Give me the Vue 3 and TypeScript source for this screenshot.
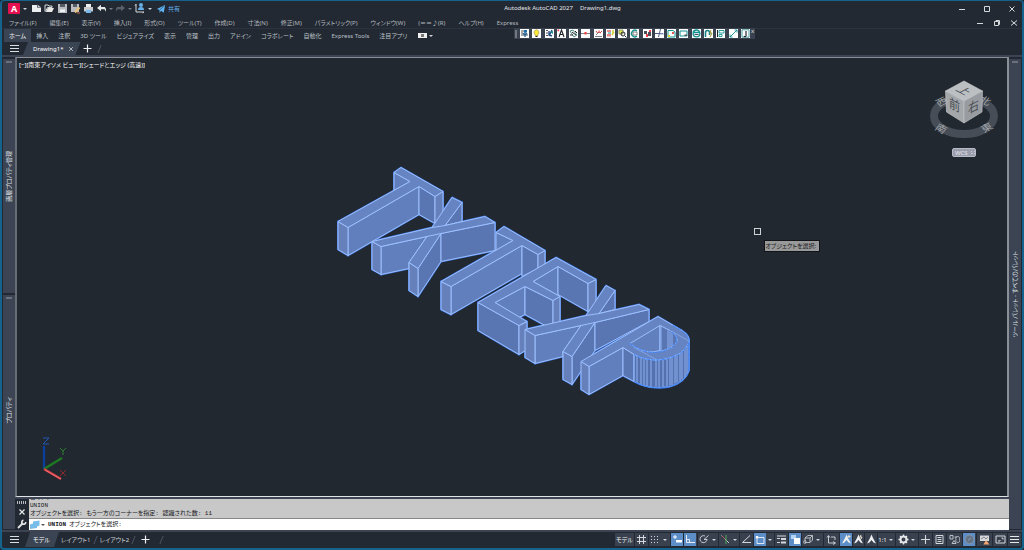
<script setup lang="ts">
import { ref } from 'vue'

interface Shape { d: string; fill?: string; stroke?: string; w?: number }
interface StatusItem { name: string; width: number; shapes?: Shape[]; text?: string; on?: boolean; arrow?: boolean }

const menus = ['ファイル(F)', '編集(E)', '表示(V)', '挿入(I)', '形式(O)', 'ツール(T)', '作成(D)', '寸法(N)', '修正(M)', 'パラメトリック(P)', 'ウィンドウ(W)', '(＝＝♪(R)', 'ヘルプ(H)', 'Express']
const ribbonTabs = ['ホーム', '挿入', '注釈', '3D ツール', 'ビジュアライズ', '表示', '管理', '出力', 'アドイン', 'コラボレート', '自動化', 'Express Tools', '注目アプリ']
const activeTab = ref('ホーム')
const layouts = ['モデル', 'レイアウト1', 'レイアウト2']
const activeLayout = ref('モデル')
const command = ref('')

const teal = '#159393'
const ink = '#20242c'
const G = '#d5d8dc'
const fileIcons: { name: string; cls?: string; shapes: Shape[] }[] = [
  { name: '新規作成', shapes: [{ d: 'M1 2H6V4.5H10V9H1Z', fill: '#eceef0' }, { d: 'M6.6 1.6 9.6 4H6.6Z', fill: '#c5c9cd' }] },
  { name: '開く', shapes: [{ d: 'M1 8.5V2H4L5 3H8V4.5H3.5L1.5 8.5', stroke: G, w: 1 }, { d: 'M3.8 5H10L8 9H1.8Z', fill: '#e8e8e6' }] },
  { name: '上書き保存', shapes: [{ d: 'M1 1H10V10H1Z', fill: '#b9bdc2' }, { d: 'M3 1H8V4H3Z', fill: '#555c66' }, { d: 'M3 6.5H8V9H3Z', fill: '#f0f1f2' }] },
  { name: '名前を付けて保存', shapes: [{ d: 'M1 1H9V9H1Z', fill: '#b9bdc2' }, { d: 'M3 1H7V4H3Z', fill: '#555c66' }, { d: 'M5 9.5 9.5 4.5', stroke: '#e9c27c', w: 2 }, { d: 'M7 10H10', stroke: '#cf7353', w: 1 }] },
  { name: '印刷', shapes: [{ d: 'M3 1H8V4H3Z', fill: '#eee' }, { d: 'M1 4H10V8.5H1Z', fill: '#c8ccd1' }, { d: 'M3 7H8V10H3Z', fill: '#79b9ed' }] },
  { name: '元に戻す', cls: 'wide', shapes: [{ d: 'M5 1.8 1 5 5 8.2V6.2H8.5L10 8.7V6L8.8 4H5Z', fill: '#e5e7e9' }] },
  { name: 'やり直し', cls: 'wide', shapes: [{ d: 'M6 1.8 10 5 6 8.2V6.2H2.5L1 8.7V6L2.2 4H6Z', fill: '#596069' }] },
  { name: 'ワークスペース', shapes: [{ d: 'M2 1V9H10M2 1.2 1 2.6M10 9 8.6 10', stroke: G, w: 1 }, { d: 'M5 2A2 2 0 1 0 9 2A2 2 0 1 0 5 2M4 7A3 3 0 0 1 10 7Z', fill: '#6ab0e8' }] },
]
const toolIcons: { name: string; shapes: Shape[] }[] = [
  { name: '画層 A', shapes: [{ d: 'M1 2H4M1 4H3M1 6H4M6 6H8', stroke: '#555', w: 1 }, { d: 'M5 1V8M3 4 5 6.5 7 4', stroke: '#1d5a8e', w: 1.2 }, { d: 'M4 1H7V3.5H4Z', fill: '#1d6fa5' }] },
  { name: '画層オン', shapes: [{ d: 'M4.5 .7A2.8 2.8 0 0 0 3 5.5L3.5 7H5.5L6 5.5A2.8 2.8 0 0 0 4.5 .7', fill: '#ffe83c', stroke: '#8d8630', w: .6 }, { d: 'M3.5 7.5H5.5', stroke: ink, w: 1 }] },
  { name: '画層 B', shapes: [{ d: 'M1 1.5H3M1 4H3M1 6.5H3', stroke: '#555', w: 1 }, { d: 'M4 7 7 1M4 2V6L7 7', stroke: '#244d86', w: 1.4 }, { d: 'M5 3 8 2V5Z', fill: teal }] },
  { name: '文字', shapes: [{ d: 'M2 8 4.5 1 7 8M3 5.5H6', stroke: ink, w: 1.1 }, { d: 'M.5 .5H2.2V2.2H.5Z', fill: '#ef3546' }] },
  { name: 'テキスト マスク', shapes: [{ d: 'M1 2 4 1 8 6 5 8Z', stroke: '#4c8c7f', w: 1 }, { d: 'M3 3 7 6M6 2 8 4M1 6H4', stroke: ink, w: 1 }] },
  { name: '結合', shapes: [{ d: 'M0 4.5H9', stroke: '#5a5e66', w: .8 }, { d: 'M3.5 3H5.5V5.5H3.5Z', fill: '#ff3d38' }] },
  { name: '円弧文字', shapes: [{ d: 'M1 7.5H8M2 6 5 3 7 4', stroke: '#575c65', w: .8 }, { d: 'M2 2 3.5 4M5 1.5V4M8 2 6 4', stroke: '#e33838', w: 1 }] },
  { name: '属性', shapes: [{ d: 'M1 1H5V3H1ZM1 5H5V7.5H1Z', fill: '#e98886' }, { d: 'M7 1V4M6 6 8 3', stroke: '#d3cf31', w: 1.5 }, { d: 'M2 4H5', stroke: teal, w: 1 }] },
  { name: 'ブロック', shapes: [{ d: 'M1 1H5V5H1Z', fill: '#e8e653', stroke: '#77835a', w: .8 }, { d: 'M3 5A2 2 0 1 0 7 5A2 2 0 1 0 3 5M7 7 8.5 8.5', stroke: ink, w: 1 }] },
  { name: '拡張オフセット', shapes: [{ d: 'M7 2A3.3 3.3 0 1 0 7 7', stroke: teal, w: 1.4 }, { d: 'M3 3H7V6H3Z', stroke: '#666', w: .8 }] },
  { name: '寸法', shapes: [{ d: 'M1 2H4V5H1ZM5 3H8V7H5Z', fill: '#4b4c58' }, { d: 'M3 5H5V8H3ZM6 1H8V3H6Z', fill: '#ef4049' }] },
  { name: 'トリム', shapes: [{ d: 'M0 4.5H8M5.5 0 3.5 8', stroke: '#515b82', w: 1 }, { d: 'M5 5H9', stroke: '#9fb3d8', w: 1 }] },
  { name: '修正雲', shapes: [{ d: 'M1 1.5H6L8 3V8H1Z', stroke: teal, w: 1 }, { d: 'M1 6H3V8H1Z', fill: '#ddda35' }, { d: 'M5 3H7V5H5Z', fill: '#e85151' }] },
  { name: 'ワイプアウト', shapes: [{ d: 'M1 2H8V7H1Z', stroke: teal, w: 1 }, { d: 'M5.5 5.5H8V7H5.5Z', fill: '#555' }] },
  { name: '円形', shapes: [{ d: 'M1 3.5H8M4.5 1A3.3 3.3 0 1 0 4.5 7.8A3.3 3.3 0 1 0 4.5 1', stroke: teal, w: 1.3 }, { d: 'M2.5 5.5H6.5', stroke: ink, w: .8 }] },
  { name: '磁石', shapes: [{ d: 'M1.5 8V3.5Q1.5 1.5 3.5 1.5T5.5 3.5V6', stroke: '#157f86', w: 1.6 }, { d: 'M7 1 5.8 4H8L6 8', stroke: '#9b9328', w: 1 }] },
  { name: '整列', shapes: [{ d: 'M1.5 1V8', stroke: ink, w: 1 }, { d: 'M3 1.5H8V4H3ZM3 5.5H6V7.5H3Z', stroke: teal, w: .9 }] },
  { name: '線分', shapes: [{ d: 'M1 8 8 1M5.5 1H8V3.5M1 5.5V8H3.5', stroke: teal, w: .9 }] },
  { name: '属性書き出し', shapes: [{ d: 'M1 .8H8V8.2H1Z', stroke: '#4c9da0', w: 1 }, { d: 'M5 2V6M3 7A1 1 0 1 0 5 6', stroke: ink, w: 1.2 }] },
]

const person = (extra: string): Shape[] => [{ d: 'M5.5 .5 7 4 10 9.5 7.5 8.5 5.5 6 3.5 8.5 1 9.5 4 4Z', fill: '#eef0f2' }, { d: extra, stroke: '#f3e7ce', w: 1 }]
const statusItems: StatusItem[] = [
  { name: 'モデル空間', width: 19, text: 'モデル' },
  { name: 'グリッド', width: 13, shapes: [{ d: 'M1 3.5H10M1 7.5H10M3.5 1V10M7.5 1V10', stroke: G, w: 1 }] },
  { name: 'スナップ', width: 21, arrow: true, shapes: [{ d: 'M1 2.5H2M4 2.5H5M7 2.5H8M1 5.5H2M4 5.5H5M7 5.5H8M1 8.5H2M4 8.5H5M7 8.5H8', stroke: G, w: 1 }] },
  { name: 'ダイナミック入力', width: 12, on: true, shapes: [{ d: 'M3 1V5M1 3H5', stroke: '#fff', w: 1 }, { d: 'M4 6H10V8.5H4Z', fill: '#fff' }] },
  { name: '直交モード', width: 13, on: true, shapes: [{ d: 'M1.5 1V8.5H10M1.5 5.5H4.5V8.5', stroke: '#e9edf3', w: 1 }] },
  { name: '極トラッキング', width: 20, arrow: true, shapes: [{ d: 'M8 5A3.5 3.5 0 1 1 6 2M5 5.5 9.5 1.5M5 5.5H8', stroke: G, w: .9 }] },
  { name: 'アイソメ作図', width: 20, arrow: true, shapes: [{ d: 'M1.5 1.5 9 9', stroke: '#b9c1c8', w: 1 }, { d: 'M6 1V10', stroke: '#4ca557', w: 1 }, { d: 'M2 2 5 5', stroke: '#b75c5f', w: 1 }] },
  { name: 'オブジェクト スナップ トラッキング', width: 13, shapes: [{ d: 'M9 1.5 1.5 8.5H10', stroke: G, w: 1 }] },
  { name: 'オブジェクト スナップ', width: 20, on: true, arrow: true, shapes: [{ d: 'M2 3.5H9V9.5H2Z', stroke: '#fff', w: .8 }, { d: 'M.8 2H3.2V4.4H.8Z', fill: '#fff' }] },
  { name: '線の太さ', width: 13, shapes: [{ d: 'M1 2H10M1 4.5H4M1 8.5H4', stroke: G, w: 1 }, { d: 'M5 5H10M5 8.5H10', stroke: G, w: 2 }] },
  { name: '選択の循環', width: 12, on: true, shapes: [{ d: 'M1 1H6V5H1Z', fill: '#b6d5f1' }, { d: 'M4 4H10V10H4Z', fill: '#fff' }] },
  { name: '3D オブジェクト スナップ', width: 21, arrow: true, shapes: [{ d: 'M2 4 5 1.5H9.5V6L7 8.5H2ZM2 4H7V8.5M7 4 9.5 1.5', stroke: '#c5c8cc', w: .9 }, { d: 'M.7 8A1.2 1.2 0 1 0 3 8A1.2 1.2 0 1 0 .7 8', stroke: '#c5c8cc', w: .7 }] },
  { name: 'ダイナミック UCS', width: 15, shapes: [{ d: 'M2.5 2V9H9M1 3.5 2.5 1.5 4 3.5M7 7.5 9.5 9 7 10.5M5 3H9V6', stroke: G, w: .9 }] },
  { name: '注釈の可視性', width: 12, on: true, shapes: person('M8 1V4M6.5 2.5H9.5') },
  { name: '注釈の自動尺度', width: 11, shapes: person('M8 1 7 3H9L8 5') },
  { name: '注釈尺度の人物', width: 12, shapes: person('') },
  { name: '注釈尺度', width: 17, text: '1:1', arrow: true },
  { name: 'ワークスペース切替', width: 22, arrow: true, shapes: [{ d: 'M5.5 2.5A3 3 0 1 0 5.5 8.5A3 3 0 1 0 5.5 2.5', stroke: '#e5e6e8', w: 2 }, { d: 'M5.5 .5V2M5.5 9V10.5M.5 5.5H2M9 5.5H10.5M2 2 3 3M8 8 9 9M9 2 8 3M3 8 2 9', stroke: '#e5e6e8', w: 1.3 }] },
  { name: '注釈モニター', width: 13, shapes: [{ d: 'M5.5 1V10M1 5.5H10', stroke: G, w: 1.1 }] },
  { name: 'クイック プロパティ', width: 13, shapes: [{ d: 'M2 1.5H9V9.5H2ZM3.5 3.5H7.5M3.5 5.5H7.5M3.5 7.5H7.5', stroke: G, w: 1 }] },
  { name: '選択表示', width: 15, shapes: [{ d: 'M1 1.5H4V5H1ZM5.5 3H8M7 5.5A2 2 0 1 0 10.5 5.5A2 2 0 1 0 7 5.5M3 9.5 5 6.5 7 9.5Z', stroke: '#c8ccd1', w: .9 }] },
  { name: 'ハードウェア アクセラレーション', width: 13, on: true, shapes: [{ d: 'M5.5 1A4.4 4.4 0 1 0 5.5 9.8A4.4 4.4 0 1 0 5.5 1', fill: '#64758a', stroke: '#8d9cb0', w: .8 }, { d: 'M4 6.5 7 4', stroke: '#8d9cb0', w: 1 }] },
  { name: '通知', width: 15, shapes: [{ d: 'M1 1.5H10V7H1Z', fill: '#d6d8da' }, { d: 'M2 5 5 3 7 5 9 3', stroke: '#697079', w: .8 }, { d: 'M7 6 10.5 10.5H4.5Z', fill: '#f2a36e' }] },
  { name: '全画面表示', width: 14, shapes: [{ d: 'M1 2H10V9H1ZM3 7H5V6M6.5 4H8V5.5', stroke: G, w: 1 }] },
  { name: 'カスタマイズ', width: 13, shapes: [{ d: 'M1 2.5H10M1 5.5H10M1 8.5H10', stroke: '#e6e7e9', w: 1 }] },
]

// Solid faces in drawing order: t = top, f = facing front-left, r = facing right, e = end cap
const faces: [string, string][] = [
  ['f', '394,172 410,181 394,190'],
  ['f', '348,227 419,186 419,214 348,255'],
  ['r', '419,186 435,196 435,223 419,214'],
  ['e', '435,196 443,191 443,219 435,223'],
  ['e', '338,221 348,227 348,255 338,249'],
  ['t', '338,221 348,227 419,186 435,196 443,191 401,167 394,172 410,181'],
  ['r', '445,225 462,202 462,221'],
  ['f', '381,246 427,236 409,262 409,268 381,274'],
  ['r', '418,268 441,233 441,261 418,296'],
  ['r', '441,233 495,222 495,250 441,261'],
  ['e', '372,241 381,246 381,274 372,269'],
  ['e', '409,262 418,268 418,296 409,290'],
  ['t', '372,241 432,227 452,197 462,202 445,225 485,216 495,222 441,233 418,268 409,262 427,236 381,246'],
  ['f', '496,232 513,240 496,250'],
  ['f', '451,286 522,245 522,273 451,314'],
  ['r', '522,245 538,254 538,268 522,276'],
  ['e', '538,254 545,250 545,264 538,268'],
  ['e', '441,281 451,286 451,314 441,309'],
  ['t', '441,281 451,286 522,245 538,254 545,250 504,226 496,232 513,240'],
  ['f', '495,302 525,286 525,314 519,317'],
  ['r', '525,286 553,300 553,325 547,326 525,314'],
  ['e', '553,300 560,296 560,324 553,325'],
  ['f', '533,281 558,266 558,295'],
  ['r', '558,266 588,283 588,311 558,294'],
  ['e', '588,283 596,279 596,307 588,311'],
  ['r', '478,302 519,325 519,354 478,330'],
  ['e', '519,325 527,321 527,349 519,354'],
  ['t', '478,302 519,325 527,321 495,302 525,286 553,300 560,296 533,281 558,266 588,283 596,279 556,257'],
  ['r', '599,313 615,290 615,309'],
  ['f', '535,335 581,325 563,351 563,356 535,363'],
  ['r', '572,356 595,322 595,350 572,384'],
  ['r', '595,322 649,309 649,321 595,350'],
  ['e', '525,329 535,335 535,363 525,357'],
  ['e', '563,351 572,356 572,384 563,379'],
  ['t', '525,329 586,315 606,285 615,290 599,313 639,304 649,309 595,322 572,356 563,351 581,325 535,335'],
]
const crossings = 'M427 236 441 233M432 227 445 225M581 325 595 322M586 315 599 313'
const ribs: [number, number, number][] = [[634, 354, 381], [637, 355, 382], [641, 357, 384], [644, 358, 385], [647, 359, 386], [651, 359, 387], [656, 359, 387], [659, 359, 387], [663, 358, 387], [667, 357, 386], [670, 357, 385], [672, 356, 385], [675, 355, 383], [677, 354, 382], [680, 352, 381], [682, 350, 379], [685, 348, 377], [687, 344, 374]]
</script>

<template>
  <div class="app">
    <header class="titlebar">
      <button class="logo" aria-label="アプリケーション メニュー">A</button>
      <i class="caret"></i>
      <div class="quick">
        <button v-for="i in fileIcons" :key="i.name" :aria-label="i.name" :class="i.cls">
          <svg viewBox="0 0 11 11"><path v-for="(s, k) in i.shapes" :key="k" :d="s.d" :fill="s.fill || 'none'" :stroke="s.stroke || 'none'" :stroke-width="s.w" /></svg>
          <i v-if="i.cls" class="caret dim"></i>
        </button>
        <i class="caret more"></i>
      </div>
      <button class="share">
        <svg viewBox="0 0 11 11"><path d="M1 5.5 10 1 8.5 9.5 5.5 7.5 4 10 3.8 6.5Z" fill="#5fb4f2" /><path d="M4 6.7 9 2" stroke="#21435e" stroke-width=".7" /></svg>共有
      </button>
      <h1><span>Autodesk AutoCAD 2027</span><span>Drawing1.dwg</span></h1>
      <div class="win">
        <button aria-label="最小化"><svg viewBox="0 0 8 8"><path d="M1 4.5H7" /></svg></button>
        <button aria-label="最大化"><svg viewBox="0 0 8 8"><path d="M1.5 1.5H6.5V6.5H1.5Z" /></svg></button>
        <button aria-label="閉じる"><svg viewBox="0 0 8 8"><path d="M1.5 1.5 6.5 6.5M6.5 1.5 1.5 6.5" /></svg></button>
      </div>
    </header>

    <nav class="menubar">
      <button v-for="m in menus" :key="m">{{ m }}</button>
      <div class="win doc">
        <button aria-label="図面を最小化"><svg viewBox="0 0 8 8"><path d="M1 4.5H7" /></svg></button>
        <button aria-label="元のサイズに戻す"><svg viewBox="0 0 8 8"><path d="M1.5 2.5H5.5V6.5H1.5ZM3 2.5V1.5H6.5V5.5H5.5" /></svg></button>
        <button aria-label="図面を閉じる"><svg viewBox="0 0 8 8"><path d="M1 1.5 7 6.5M7 1.5 1 6.5" /></svg></button>
      </div>
    </nav>

    <nav class="ribbon">
      <button v-for="t in ribbonTabs" :key="t" :class="{ active: t === activeTab }" @click="activeTab = t">{{ t }}</button>
      <button class="panel-toggle" aria-label="リボン表示"><b></b><i class="caret"></i></button>
      <div class="floating">
        <i class="grip"></i>
        <div class="tools">
          <button v-for="i in toolIcons" :key="i.name" :aria-label="i.name">
            <svg viewBox="0 0 9 9"><path v-for="(s, k) in i.shapes" :key="k" :d="s.d" :fill="s.fill || 'none'" :stroke="s.stroke || 'none'" :stroke-width="s.w" /></svg>
          </button>
        </div>
        <button class="close" aria-label="ツールバーを閉じる">x</button>
      </div>
    </nav>

    <div class="filetabs">
      <button class="burger" aria-label="ファイル タブ メニュー"><i></i><i></i><i></i></button>
      <div class="filetab"><span>Drawing1*</span><button aria-label="タブを閉じる"><svg viewBox="0 0 8 8"><path d="M1.5 1.5 6.5 6.5M6.5 1.5 1.5 6.5" /></svg></button></div>
      <button class="plus" aria-label="新しいタブ"><svg viewBox="0 0 9 9"><path d="M4.5 .5V8.5M.5 4.5H8.5" /></svg></button>
      <i class="slash"></i>
    </div>

    <main class="body">
      <aside class="dock left">
        <section class="palette layers"><span>画層プロパティ管理</span></section>
        <section class="palette props"><span>プロパティ</span></section>
      </aside>

      <div class="center">
        <div class="canvas">
          <svg class="model" viewBox="17 59 990 435" role="img" aria-label="3D モデル">
            <g class="halo">
              <polygon v-for="([, p], n) in faces" :key="n" :points="p" />
              <path d="M581 361 658 316 682 330Q690 335 689 342V370Q685 382 670 386Q650 390 634 381L623 375 589 394 581 389Z" />
            </g>
            <polygon v-for="([k, p], n) in faces" :key="n" :points="p" :class="k" />
            <path class="line" :d="crossings" />
            <path class="f" d="M589 366 623 347V375L589 394Z" />
            <path class="r" d="M623 347 634 354V381L623 375Z" />
            <path class="curve" d="M634 354Q648 361 660 359Q684 355 689 339V370Q685 382 670 386Q650 390 634 381Z" />
            <path v-for="([x, a, b], n) in ribs" :key="'r' + n" class="rib" :d="`M${x} ${a}V${b}`" />
            <path class="e" d="M581 361 589 366V394L581 389Z" />
            <path class="t" d="M581 361 658 316 682 330Q690 335 689 342Q684 355 663 359Q647 361 634 354L623 347 589 366Z" />
            <path class="f" d="M630 343 660 325V350Q648 354 636 347Z" />
            <path class="r" d="M660 325 670 330Q678 335 677 341Q673 348 660 351Z" />
            <path class="rib" d="M668 330V349M670 331V348M672 332V347M661 325V350" />
            <path class="rib faint" d="M634 347 656 359M672 331 688 340" />
            <path class="dots" d="M630 343 636 347Q648 354 662 351Q677 346 677 339Q676 334 670 330M673 325Q691 334 689 342Q684 355 663 359Q647 361 634 354M689 342V370Q685 382 670 386Q650 390 634 381" />
          </svg>

          <div class="viewlabel"><button>[−]</button><button>[南東アイソメ ビュー]</button><button>[シェードとエッジ (高速)]</button></div>

          <div class="cursor"></div>
          <div class="prompt">オブジェクトを選択:</div>

          <div class="viewcube">
            <svg viewBox="0 0 76 62" role="img" aria-label="ビューキューブ">
              <ellipse cx="38" cy="38" rx="30" ry="18" fill="none" stroke="#464d57" stroke-width="8" />
              <g class="compass">
                <text transform="matrix(.9 .45 -.55 .7 8 51)">南</text>
                <text transform="matrix(.9 -.45 .55 .7 58 55)">東</text>
                <text transform="matrix(.9 -.45 .55 .7 13 29)">西</text>
                <text transform="matrix(.9 .45 -.55 .7 52 23)">北</text>
              </g>
              <path d="M38 3 56.5 13 38 23 19.5 13Z" fill="#bcbfc2" stroke="#d2d4d6" stroke-width=".6" />
              <path d="M19.5 13 38 23V45L20.5 34Z" fill="#a4a7aa" stroke="#c8cacc" stroke-width=".6" />
              <path d="M56.5 13 38 23V45L56 34Z" fill="#989b9f" stroke="#c8cacc" stroke-width=".6" />
              <g class="faces">
                <text transform="matrix(.8 .42 -.8 .42 29 12)">上</text>
                <text transform="matrix(.85 .42 0 1 23 29)">前</text>
                <text transform="matrix(.85 -.42 0 1 42 36)">右</text>
              </g>
            </svg>
            <button>WCS<i></i></button>
          </div>

          <svg class="ucs" viewBox="0 0 32 46" role="img" aria-label="UCS アイコン">
            <path d="M5 33V10" stroke="#0b3f9c" stroke-width="2.4" />
            <path d="M5 33 23 22" stroke="#1d7a20" stroke-width="2.4" />
            <path d="M5 33 22 43" stroke="#d63a41" stroke-width="2.4" />
            <path d="M6 34 22 43" stroke="#ef8b8b" stroke-width=".7" />
            <path d="M4 2H10L4 8H10" stroke="#2056b3" />
            <path d="M21 12 24 15 27 12M24 15V19" stroke="#2f7f33" />
            <path d="M21 34 27 40M27 34 21 40" stroke="#8e2930" />
          </svg>
        </div>

        <section class="cmd">
          <div class="cmdside">
            <i class="dotsgrip"></i>
            <button aria-label="閉じる"><svg viewBox="0 0 8 8"><path d="M1.5 1.5 6.5 6.5M6.5 1.5 1.5 6.5" stroke="#e4e6e8" stroke-width="1.2" /></svg></button>
            <button aria-label="カスタマイズ"><svg viewBox="0 0 10 10"><path d="M1 9 6 4" stroke="#e4e6e8" stroke-width="1.8" /><path d="M8.7 3A2 2 0 1 1 6.5 1.3" stroke="#e4e6e8" stroke-width="1.6" fill="none" /></svg></button>
          </div>
          <div class="cmdmain">
            <div class="history">
              <p>コマンド: UNI</p>
              <p>UNION</p>
              <p>オブジェクトを選択: もう一方のコーナーを指定: 認識された数: 11</p>
            </div>
            <label class="entry">
              <svg viewBox="0 0 10 9"><path d="M0 4.5 3 3.5V1.5L9.5 .5V5.5L7 6.5V8L0 9Z" fill="#78bce9" /></svg>
              <i class="caret dark"></i>
              <b>UNION</b><span>オブジェクトを選択:</span>
              <input v-model="command" type="text" aria-label="コマンド" />
            </label>
          </div>
        </section>
      </div>

      <aside class="dock right">
        <section class="palette tool"><span>ツール パレット - すべてのパレット</span></section>
      </aside>
    </main>

    <footer class="status">
      <button class="burger" aria-label="レイアウト メニュー"><i></i><i></i><i></i></button>
      <template v-for="(l, n) in layouts" :key="l">
        <button class="layout" :class="{ active: l === activeLayout }" @click="activeLayout = l">{{ l }}</button>
        <i v-if="n > 0" class="slash"></i>
      </template>
      <button class="plus" aria-label="新しいレイアウト"><svg viewBox="0 0 9 9"><path d="M4.5 .5V8.5M.5 4.5H8.5" /></svg></button>
      <i class="slash"></i>
      <div class="toggles">
        <button v-for="s in statusItems" :key="s.name" :aria-label="s.name" :class="{ on: s.on }" :style="{ width: s.width + 'px' }">
          <span v-if="s.text">{{ s.text }}</span>
          <svg v-else viewBox="0 0 11 11"><path v-for="(p, k) in s.shapes" :key="k" :d="p.d" :fill="p.fill || 'none'" :stroke="p.stroke || 'none'" :stroke-width="p.w" /></svg>
          <i v-if="s.arrow" class="drop"><i class="caret"></i></i>
        </button>
      </div>
    </footer>
  </div>
</template>

<style>
html, body { margin: 0; background: #222830; }
</style>

<style scoped>
* { box-sizing: border-box; }
.app {
  height: 100vh; display: flex; flex-direction: column; overflow: hidden;
  border: 2px solid #15638c; border-top-width: 1px; border-radius: 4px;
  background: #222933; color: #b3b8be;
  font: 6px/10px "Noto Sans", "Noto Sans CJK JP", sans-serif;
  font-feature-settings: "palt";
}
button { border: 0; margin: 0; padding: 0; background: none; color: inherit; font: inherit; font-feature-settings: inherit; white-space: nowrap; display: flex; align-items: center; flex: none; }
svg { display: block; flex: none; fill: none; }
i { font-style: normal; flex: none; }
.caret { width: 0; height: 0; border: 2px solid transparent; border-top-color: #d0d3d7; border-bottom: 0; }
.caret.dim { border-top-color: #777e87; }
.caret.dark { border-top-color: #555; }

.titlebar { position: relative; height: 16px; flex: none; display: flex; align-items: center; padding: 0 0 1px 6px; }
.logo { width: 12px; height: 11px; background: #e51050; color: #fff; font: bold 9px/11px "Noto Sans", sans-serif; justify-content: center; border-radius: 1px; }
.titlebar > .caret { margin-left: 3px; }
.quick { display: flex; align-items: center; gap: 2px; margin-left: 4px; }
.quick svg { width: 11px; height: 11px; }
.quick .wide { gap: 2px; width: 17px; }
.quick .more { margin-left: 1px; border-top-color: #d0d3d7; }
.share { margin-left: 4px; color: #62b3ee; gap: 2px; }
.share svg { width: 10px; height: 10px; }
h1 { position: absolute; left: 0; right: 0; margin: 0; padding-left: 101px; display: flex; justify-content: center; gap: 7px; font: 6px/15px "Noto Sans", sans-serif; color: #e4e6e9; pointer-events: none; }
.win { margin-left: auto; margin-right: 6px; display: flex; gap: 17px; }
.win svg { width: 8px; height: 8px; }
.win path { stroke: #d5d8dc; stroke-width: 1; }

.menubar { height: 12px; flex: none; display: flex; align-items: center; gap: 13px; padding-left: 7px; border-bottom: 1px solid #2c333e; color: #b3b8be; }
.win.doc { margin-right: 4px; gap: 9px; }

.ribbon { position: relative; height: 13px; flex: none; display: flex; align-items: stretch; padding-left: 2px; color: #bcc1c7; }
.ribbon > button { padding: 0 5px; }
.ribbon > .active { background: #3b4453; color: #f0f2f4; }
.ribbon > .panel-toggle { gap: 2px; padding-left: 6px; }
.panel-toggle b { width: 9px; height: 5px; border: 1px solid #eee; background: #777; border-width: 1px 3px; }
.floating { position: absolute; left: 512px; top: -1px; height: 11px; width: 241px; display: flex; align-items: center; background: #3a4250; z-index: 2; }
.grip { width: 2px; height: 8px; background: #727985; margin: 0 3px 0 1px; }
.tools { display: flex; flex: 1; justify-content: space-between; }
.tools svg { width: 9px; height: 9px; background: #fff; }
.close { align-self: flex-start; line-height: 6px; width: 5px; color: #e0e2e5; justify-content: center; }

.filetabs { height: 13px; flex: none; display: flex; align-items: stretch; padding-left: 8px; }
.burger { width: 9px; flex-direction: column; justify-content: center; gap: 2px; }
.burger i { width: 9px; height: 1px; background: #dcdfe2; }
.filetab { display: flex; align-items: center; gap: 4px; margin-left: 4px; padding: 0 7px 0 10px; background: #3b4453; color: #fff; clip-path: polygon(5px 0, 100% 0, calc(100% - 5px) 100%, 0 100%); }
.filetab svg { width: 6px; height: 6px; }
.filetab path { stroke: #bfc4ca; stroke-width: 1.2; }
.plus { margin-left: 2px; }
.plus svg { width: 9px; height: 9px; }
.plus path { stroke: #f0f1f3; stroke-width: 1.2; }
.slash { width: 1px; height: 8px; align-self: center; margin: 0 7px; background: #4c5461; transform: skewX(-22deg); }

.body { flex: 1; min-height: 0; display: flex; background: #343c49; border-top: 2px solid #3c4453; }
.dock { width: 13px; flex: none; display: flex; flex-direction: column; gap: 2px; background: #222933; padding: 2px 0 1px 1px; }
.dock.right { padding: 2px 1px 1px 0; }
.palette { position: relative; flex: 1 1 0; min-height: 0; background: #3c4453; display: flex; justify-content: center; align-items: center; color: #dfe2e5; }
.palette::before { content: ""; position: absolute; top: 2px; width: 6px; height: 2px; background: #69717d; }
.palette span { writing-mode: vertical-rl; text-orientation: sideways; transform: rotate(180deg); white-space: nowrap; line-height: 11px; }
.props { align-items: flex-end; }
.props span { margin-bottom: 105px; }

.center { flex: 1; min-width: 0; display: flex; flex-direction: column; }
.canvas { position: relative; flex: 1; min-height: 0; background: #222830; border: 2px solid #8b9097; border-top-width: 1px; border-bottom: 1px solid #e0e3e7; border-left-color: #666d76; }
.model { position: absolute; inset: 0; width: 100%; height: 100%; }
.model polygon, .model path { stroke: #9dc0ff; stroke-width: 1; stroke-linejoin: round; }
.model .halo polygon, .model .halo path { fill: #3f78e0; stroke: #3a73dc; stroke-width: 2; }
.model .t { fill: #6683c2; }
.model .f { fill: #617fbd; }
.model .r { fill: #5975b2; }
.model .e { fill: #6580ba; }
.model .curve { fill: #5471ae; stroke: #7ba8fa; }
.model .rib { stroke: #8fb1f2; stroke-width: 1; }
.model .faint { opacity: .7; }
.model .line { fill: none; }
.model .dots { fill: none; stroke: #3d86ff; stroke-dasharray: 4 1; stroke-width: 1; }
.viewlabel { position: absolute; left: 2px; top: 2px; display: flex; color: #fff; }
.cursor { position: absolute; left: 74.4%; top: 38.9%; width: 7px; height: 7px; border: 1px solid #d0d3d6; }
.prompt { position: absolute; left: 75.5%; top: 41.6%; min-width: 56px; height: 12px; background: #999; border: 1px solid #111419; color: #17191c; line-height: 10px; white-space: nowrap; }
.viewcube { position: absolute; right: 5px; top: 20px; width: 76px; display: flex; flex-direction: column; align-items: center; gap: 8px; }
.viewcube svg { width: 76px; height: 62px; }
.compass text { font: 11px "Noto Sans CJK JP", sans-serif; fill: #a0a4a8; }
.faces text { font: 13px "Noto Sans CJK JP", sans-serif; fill: #484d54; }
.viewcube button { width: 24px; height: 9px; background: #9a9eac; border: 1px solid #b8bbc6; border-radius: 2px; color: #e4e5ea; padding-left: 2px; gap: 3px; }
.viewcube button i { width: 4px; height: 3px; border: 1px dotted #c5c8d2; border-top: 0; }
.ucs { position: absolute; left: 22px; bottom: 14px; width: 32px; height: 46px; }

.cmd { flex: none; display: flex; background: #222933; border-top: 2px solid #3c4453; }
.cmdside { width: 14px; flex: none; display: flex; flex-direction: column; align-items: center; justify-content: space-between; padding: 2px 0 1px; }
.dotsgrip { width: 10px; height: 3px; background: repeating-linear-gradient(90deg, #b7bbc1 0 1px, transparent 1px 2px); }
.cmdside svg { width: 8px; height: 8px; }
.cmdside button:last-child svg { width: 10px; height: 10px; }
.cmdmain { flex: 1; min-width: 0; background: #c8c8c8; color: #17191c; font-family: "Liberation Mono", "Noto Sans CJK JP", monospace; }
.history { height: 20px; overflow: hidden; display: flex; flex-direction: column; justify-content: flex-end; padding: 0 1px; border-bottom: 1px solid #888; }
.history p { margin: 0; line-height: 8px; white-space: nowrap; flex: none; }
.entry { display: flex; align-items: center; height: 11px; background: #fff; }
.entry > svg { width: 10px; height: 9px; margin: 0 1px; }
.entry b { margin: 0 3px; }
.entry input { flex: 1; min-width: 0; border: 0; padding: 0; height: 9px; outline: 0; background: none; font: inherit; }

.status { height: 18px; flex: none; display: flex; align-items: stretch; padding: 0 0 1px 8px; border-top: 2px solid #3c4453; }
.layout { color: #cdd1d5; }
.layout.active { padding: 0 9px 0 8px; margin: 0 2px 0 6px; background: #3b4453; color: #fff; clip-path: polygon(5px 0, 100% 0, calc(100% - 5px) 100%, 0 100%); }
.status > .slash { margin: 0 4px; }
.status > .plus { margin: 0 7px 0 3px; }
.toggles { margin-left: auto; display: flex; gap: 1px; align-items: center; margin-right: 1px; color: #f1f3f5; }
.toggles button { height: 13px; background: #39414f; justify-content: center; }
.toggles svg { width: 11px; height: 11px; }
.toggles .on { background: #39414f linear-gradient(#5d8ec8, #5d8ec8) left / 12px 100% no-repeat; }
.drop { width: 8px; display: flex; justify-content: center; }
</style>
